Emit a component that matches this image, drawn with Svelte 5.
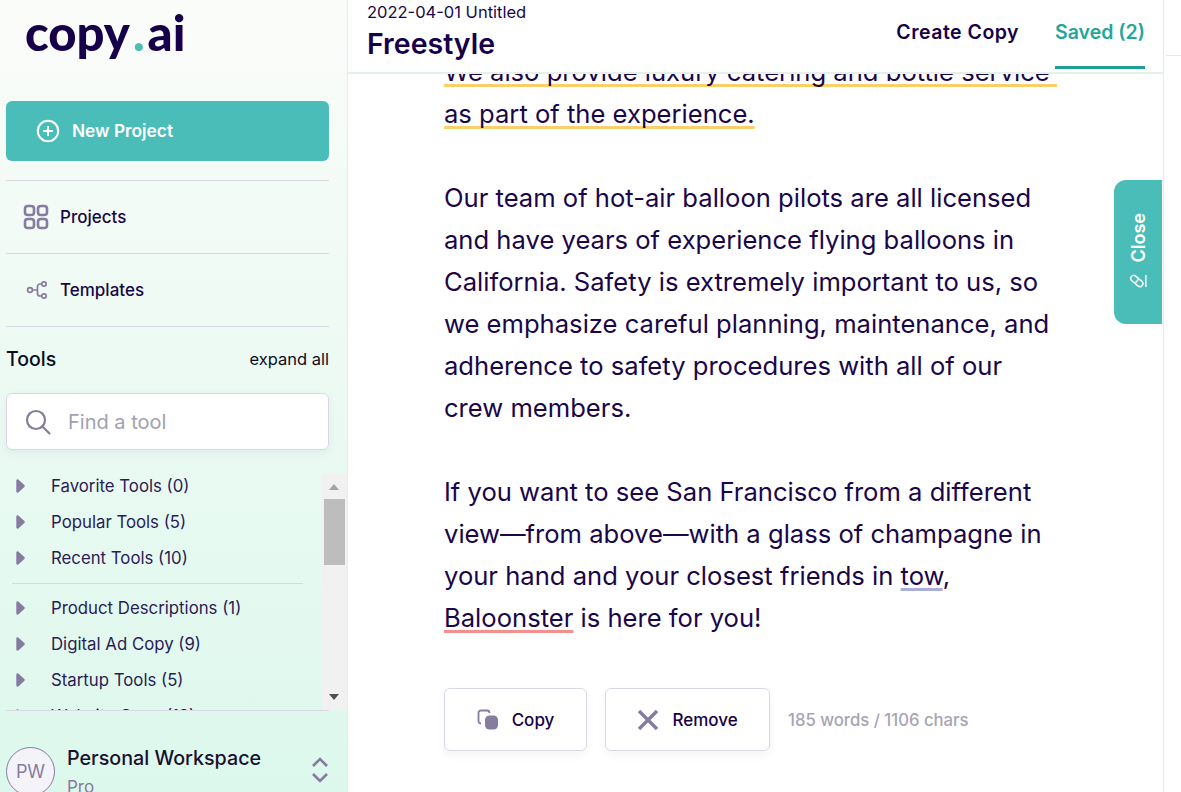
<script>
  const topTools = ['Favorite Tools (0)', 'Popular Tools (5)', 'Recent Tools (10)'];
  const moreTools = ['Product Descriptions (1)', 'Digital Ad Copy (9)', 'Startup Tools (5)', 'Website Copy (12)'];
</script>

{#snippet caret()}
  <svg class="caret" width="9" height="14" viewBox="0 0 9 14" fill="#857ca0" stroke="#857ca0" stroke-width="2.4" stroke-linejoin="round"><path d="M1.500 1.500L7.500 7l-6 5.500z" /></svg>
{/snippet}

<div class="page">
  <aside class="sidebar">
    <div class="logo">copy<span class="dot">.</span>ai</div>

    <button class="new-project" type="button">
      <svg width="24" height="24" viewBox="0 0 24 24" fill="none" stroke="#fff" stroke-width="2"><circle cx="12" cy="12" r="10.2" /><path d="M12 7v10M7 12h10" /></svg>
      New Project
    </button>

    <div class="nav">
      <div class="nav-row">
        <svg width="26" height="26" viewBox="0 0 26 26" fill="none" stroke="#857ca0" stroke-width="2.6"><rect x="2" y="2" width="9" height="9" rx="2.8" /><rect x="15" y="2" width="9" height="9" rx="2.8" /><rect x="2" y="15" width="9" height="9" rx="2.8" /><rect x="15" y="15" width="9" height="9" rx="2.8" /></svg>
        <span>Projects</span>
      </div>
      <div class="nav-row">
        <svg width="26" height="26" viewBox="0 0 26 26" fill="none" stroke="#857ca0" stroke-width="1.7"><circle cx="7" cy="13" r="2.4" /><circle cx="21" cy="7" r="2.2" /><circle cx="21" cy="19" r="2.2" /><path d="M9.500 13h5M19 7h-2a2.500 2.500 0 0 0-2.500 2.500v7A2.500 2.500 0 0 0 17 19h2" /></svg>
        <span>Templates</span>
      </div>
    </div>

    <div class="tools-head">
      <span class="tools-title">Tools</span>
      <span class="expand">expand all</span>
    </div>

    <div class="search">
      <svg width="28" height="28" viewBox="0 0 28 28" fill="none" stroke="#857ca0" stroke-width="2.2" stroke-linecap="round"><circle cx="12" cy="12" r="9" /><path d="M18.500 18.500l7 7" /></svg>
      <span>Find a tool</span>
    </div>

    <div class="tool-scroll">
      <div class="tool-list">
        {#each topTools as t}
          <div class="tool">{@render caret()}{t}</div>
        {/each}
        <div class="tool-sep"></div>
        {#each moreTools as t}
          <div class="tool">{@render caret()}{t}</div>
        {/each}
      </div>
      <div class="scrollbar">
        <i class="arrow up"></i>
        <div class="thumb"></div>
        <i class="arrow down"></i>
      </div>
    </div>

    <div class="workspace">
      <div class="avatar">PW</div>
      <div class="ws-text">
        <div class="ws-name">Personal Workspace</div>
        <div class="ws-plan">Pro</div>
      </div>
      <svg width="18" height="28" viewBox="0 0 18 28" fill="none" stroke="#857ca0" stroke-width="2.6"><path d="M2 10l7-7 7 7M2 18l7 7 7-7" /></svg>
    </div>
  </aside>

  <main class="main">
    <header class="top">
      <div class="titles">
        <div class="doc-date">2022-04-01 Untitled</div>
        <div class="doc-name">Freestyle</div>
      </div>
      <nav class="tabs">
        <span class="tab create">Create Copy</span>
        <span class="tab active">Saved (2)</span>
      </nav>
    </header>

    <div class="content">
      <div class="copy">
        <p>
          <span class="u-yellow">We also provide luxury catering and bottle service&nbsp;</span><br />
          <span class="u-yellow">as part of the experience.</span>
        </p>
        <p>Our team of hot-air balloon pilots are all licensed<br />and have years of experience flying balloons in<br />California. Safety is extremely important to us, so<br />we emphasize careful planning, maintenance, and<br />adherence to safety procedures with all of our<br />crew members.</p>
        <p>If you want to see San Francisco from a different<br />view—from above—with a glass of champagne in<br />your hand and your closest friends in <span class="u-blue">tow</span>,<br /><span class="u-red">Baloonster</span> is here for you!</p>
      </div>

      <div class="actions">
        <button class="action copy-btn" type="button">
          <svg width="22" height="22" viewBox="0 0 22 22"><path d="M4 14.500A2.500 2.500 0 0 1 1.500 12V4A2.500 2.500 0 0 1 4 1.500h6A2.500 2.500 0 0 1 12.500 4" fill="none" stroke="#857ca0" stroke-width="1.8" /><rect x="8" y="6.500" width="13" height="14" rx="4.500" fill="#857ca0" /></svg>
          Copy
        </button>
        <button class="action remove-btn" type="button">
          <svg width="22" height="22" viewBox="0 0 22 22" fill="none" stroke="#857ca0" stroke-width="3.400"><path d="M2 2l18 18M20 2L2 20" /></svg>
          Remove
        </button>
        <span class="count">185 words / 1106 chars</span>
      </div>
    </div>

    <div class="close-tab">
      <span>Close</span>
      <svg width="18" height="14" viewBox="0 0 18 14" fill="none" stroke="#fff" stroke-width="1.500"><rect x="0.800" y="4" width="14" height="6" rx="3" transform="rotate(40 7.800 7)" /><path d="M10 4.600l-3.600 4.300" /><path d="M16.800 1v12" /></svg>
    </div>
  </main>

  <div class="rail"><div class="rail-tick"></div></div>
</div>

<style>
  :global(body) {
    margin: 0;
    background: #fff;
    font-family: Inter, "Noto Sans", sans-serif;
    color: #1a064a;
    overflow: hidden;
  }

  .page {
    display: flex;
    width: 1181px;
    height: 792px;
    overflow: hidden;
    position: relative;
  }

  /* --- Sidebar --- */
  .sidebar {
    width: 348px;
    flex-shrink: 0;
    height: 792px;
    box-sizing: border-box;
    padding: 0 18px 0 6px;
    border-right: 1px solid #e3f0ea;
    background: linear-gradient(180deg, #fbfcfa 0%, #dcf8ec 100%);
    overflow: hidden;
  }

  .logo {
    height: 101px;
    margin-left: 19px;
    font-family: Lato, sans-serif;
    font-weight: 900;
    font-size: 49px;
    line-height: 64px;
    color: #16004a;
    box-sizing: border-box;
  }

  .dot { color: #4abdb9; margin: 0 3px; }

  .new-project {
    display: flex;
    align-items: center;
    gap: 12px;
    width: 100%;
    height: 60px;
    padding: 0 0 2px 30px;
    border: 0;
    border-radius: 6px;
    background: #4abdb9;
    color: #fff;
    font-family: inherit;
    font-size: 17.300px;
    font-weight: 600;
  }

  .new-project svg { margin-top: 2px; }

  .nav { margin-top: 19px; }

  .nav-row {
    display: flex;
    align-items: center;
    gap: 11px;
    height: 73px;
    box-sizing: border-box;
    padding-left: 17px;
    border-top: 1px solid #dbd8e6;
    font-size: 17px;
    font-weight: 500;
  }

  .tools-head {
    display: flex;
    align-items: center;
    justify-content: space-between;
    height: 67px;
    border-top: 1px solid #dbd8e6;
    padding-bottom: 2px;
    box-sizing: border-box;
  }

  .tools-title { font-size: 19.500px; font-weight: 500; color: #0c0c1e; }
  .expand { font-size: 16.500px; color: #0c0c1e; }

  .search {
    display: flex;
    align-items: center;
    gap: 16px;
    height: 57px;
    box-sizing: border-box;
    padding-left: 17px;
    background: #fff;
    border: 1px solid #dbd8e6;
    border-radius: 6px;
    box-shadow: 0 3px 8px rgba(40, 20, 90, 0.06);
    font-size: 20px;
    color: #a29fb0;
  }

  .tool-scroll {
    display: flex;
    height: 236px;
    margin-top: 24px;
    margin-right: -18px;
    overflow: hidden;
    position: relative;
  }

  .tool-list { flex: 1; min-width: 0; margin-top: -6px; }

  .tool {
    display: flex;
    align-items: center;
    height: 36px;
    font-size: 16.800px;
    color: #2b1c55;
  }

  .caret {
    flex-shrink: 0;
    margin: 0 26px 0 10px;
  }

  .tool-sep {
    height: 1px;
    margin: 7px 19px 6px 6px;
    background: #dbd8e6;
  }

  .scrollbar {
    width: 25px;
    flex-shrink: 0;
    background: #f1f1f1;
    position: relative;
  }

  .thumb {
    position: absolute;
    top: 25px;
    left: 2px;
    width: 21px;
    height: 66px;
    background: #bdbdbd;
  }

  .arrow {
    position: absolute;
    left: 7px;
    width: 0;
    height: 0;
    border-left: 5.500px solid transparent;
    border-right: 5.500px solid transparent;
  }

  .arrow.up { top: 10px; border-bottom: 6px solid #a3a3a3; }
  .arrow.down { bottom: 10px; border-top: 6px solid #505050; }

  .workspace {
    display: flex;
    align-items: flex-start;
    border-top: 1px solid #dbd8e6;
    padding-top: 36px;
    height: 90px;
  }

  .avatar {
    width: 47px;
    height: 47px;
    flex-shrink: 0;
    border: 1px solid #857ca0;
    border-radius: 50%;
    background: #f5f3fa;
    display: flex;
    align-items: center;
    justify-content: center;
    font-size: 18px;
    color: #857ca0;
  }

  .ws-text { flex: 1; margin-left: 12px; margin-top: -2px; }
  .ws-name { font-size: 19.700px; font-weight: 500; color: #1a1030; line-height: 26px; }
  .ws-plan { font-size: 17px; color: #857ca0; margin-top: 5px; line-height: 22px; }

  .workspace svg { margin: 9px 0 0 0; }

  /* --- Main --- */
  .main {
    flex: 1;
    min-width: 0;
    position: relative;
    height: 792px;
    display: flex;
    flex-direction: column;
    overflow: hidden;
  }

  .top {
    flex-shrink: 0;
    height: 74px;
    box-sizing: border-box;
    display: flex;
    justify-content: space-between;
    padding: 0 18px 0 19px;
    border-bottom: 2px solid #e5f0eb;
    background: #fff;
    position: relative;
    z-index: 2;
  }

  .doc-date { font-size: 16.500px; line-height: 24px; color: #1a064a; }
  .doc-name { font-size: 28.500px; font-weight: 600; line-height: 40px; color: #16004a; }

  .tabs { display: flex; gap: 36px; }

  .tab {
    display: block;
    height: 69px;
    box-sizing: border-box;
    padding-top: 19px;
    line-height: 26px;
    font-size: 19.500px;
    font-weight: 600;
    color: #16004a;
  }

  .tab.create { letter-spacing: 0.5px; }

  .tab.active {
    color: #24a79b;
    border-bottom: 3px solid #1f9f95;
  }

  .content {
    flex: 1;
    min-height: 0;
    overflow: hidden;
    padding-left: 96px;
  }

  .copy {
    margin-top: -23px;
    font-size: 25.600px;
    line-height: 42px;
    color: #1a064a;
  }

  .copy p { margin: 0 0 42px; white-space: nowrap; }

  .u-yellow, .u-blue, .u-red {
    text-decoration-line: underline;
    text-decoration-thickness: 3px;
    text-underline-offset: 3px;
    text-decoration-skip-ink: none;
  }

  .u-yellow { text-decoration-color: #fbd06b; }
  .u-blue { text-decoration-color: #aaaedb; }
  .u-red { text-decoration-color: #f58e8e; }

  .actions {
    display: flex;
    align-items: center;
    gap: 18px;
    margin-top: 49px;
  }

  .action {
    display: flex;
    align-items: center;
    justify-content: center;
    gap: 13px;
    height: 63px;
    background: #fff;
    border: 1px solid #dbd8e6;
    border-radius: 6px;
    box-shadow: 0 4px 10px rgba(40, 20, 90, 0.05);
    font-family: inherit;
    font-size: 17px;
    font-weight: 500;
    color: #16004a;
  }

  .copy-btn { width: 143px; }
  .remove-btn { width: 165px; }

  .count { font-size: 16.700px; font-weight: 500; color: #a7a4b5; }

  .close-tab {
    position: absolute;
    top: 180px;
    right: 1px;
    width: 48px;
    height: 144px;
    display: flex;
    flex-direction: column;
    align-items: center;
    justify-content: center;
    gap: 12px;
    padding-bottom: 3px;
    box-sizing: border-box;
    background: #4abdb9;
    border-radius: 12px 0 0 12px;
    color: #fff;
    font-size: 18px;
    font-weight: 600;
    z-index: 3;
  }

  .close-tab span { writing-mode: vertical-rl; transform: rotate(180deg); }

  .rail {
    width: 18px;
    flex-shrink: 0;
    box-sizing: border-box;
    border-left: 1px solid #e5ecea;
    padding: 55px 0 0 2px;
  }

  .rail-tick { height: 1px; background: #e5ecea; }
</style>
